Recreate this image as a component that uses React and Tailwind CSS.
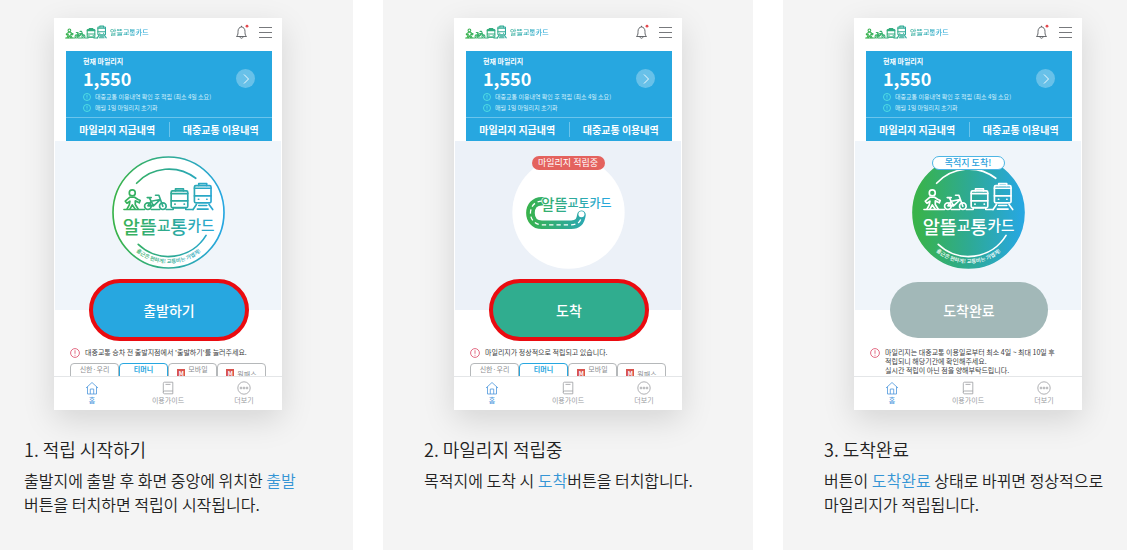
import React from 'react'
import clsx from 'clsx'

const steps = [
    {
        id: 'start',
        title: '1. 적립 시작하기',
        before: '출발지에 출발 후 화면 중앙에 위치한 ',
        accent: '출발',
        after: ' 버튼을 터치하면 적립이 시작됩니다.',
        button: '출발하기',
        notice: ["대중교통 승차 전 출발지점에서 '출발하기'를 눌러주세요."],
    },
    {
        id: 'moving',
        title: '2. 마일리지 적립중',
        before: '목적지에 도착 시 ',
        accent: '도착',
        after: '버튼을 터치합니다.',
        button: '도착',
        notice: ['마일리지가 정상적으로 적립되고 있습니다.'],
    },
    {
        id: 'done',
        title: '3. 도착완료',
        before: '버튼이 ',
        accent: '도착완료',
        after: ' 상태로 바뀌면 정상적으로 마일리지가 적립됩니다.',
        button: '도착완료',
        notice: [
            '마일리지는 대중교통 이용일로부터 최소 4일 ~ 최대 10일 후',
            '적립되니 해당기간에 확인해주세요.',
            '실시간 적립이 아닌 점을 양해부탁드립니다.',
        ],
    },
]

const buttonStyles = {
    start: 'h-[62px] w-40 border-4 border-[#ea0b10] bg-[#27a7e0]',
    moving: 'h-[62px] w-40 border-4 border-[#ea0b10] bg-[#30ad8f]',
    done: 'my-[3px] h-14 w-[158px] bg-[#a2b8b8]',
}

// Walker, bicycle, bus and train standing on one ground line
const Transit = () => (
    <g fill="none" strokeLinecap="round" strokeLinejoin="round">
        <circle cx="247" cy="158" r="9" />
        <path d="M240 171 L226 183 L231 189 L240 183 L238 194 L231 207 M254 171 L263 177 L271 181 L268 188 L256 182 V193 L265 207 M240 171 H254 M240 207 L247 194 L256 207" />
        <path d="M222 208 H284 M304 208 H330 M349 208 H370 V203 M408 203 V208 H430" />
        <circle cx="294" cy="198" r="10" />
        <circle cx="339" cy="198" r="10" />
        <path d="M292 172 H304 M298 172 L311 197 H294 L304 183 L331 178 L311 197 M317 165 H327 L339 198" />
        <rect x="364" y="152" width="50" height="50" rx="4" />
        <path d="M377 152 V146 H401 V152 M364 160 H414 M364 182 H414 M374 203 H404" />
        <path d="M375 192 h1 M403 192 h1" />
        <rect x="434" y="136" width="50" height="52" rx="4" />
        <path d="M447 136 V130 H471 V136 M434 144 H484 M434 167 H484 M446 177 h1 M471 177 h1" />
        <path d="M440 193 L430 208 M478 193 L489 208 M447 196 H471 M443 207 H475" />
    </g>
)

const Gradient = ({ id, x1, x2 }) => (
    <linearGradient id={id} gradientUnits="userSpaceOnUse" x1={x1} y1="0" x2={x2} y2="0">
        <stop offset="0" stopColor="#39b34a" />
        <stop offset="0.5" stopColor="#2eaa93" />
        <stop offset="1" stopColor="#27a7e0" />
    </linearGradient>
)

const HeaderLogo = ({ id }) => (
    <div className="flex items-center gap-[3px]">
        <svg viewBox="218 124 276 90" className="h-[14px] w-[42px]" aria-hidden="true">
            <defs><Gradient id={`head-${id}`} x1="218" x2="700" /></defs>
            <g stroke={`url(#head-${id})`} strokeWidth="7"><Transit /></g>
        </svg>
        <span className="bg-linear-to-r from-[#2eaa93] to-[#27a7e0] bg-clip-text text-[7px] leading-[12px] font-medium text-transparent">
            알뜰교통카드
        </span>
    </div>
)

const Badge = ({ id, filled }) => {
    const paint = filled ? '#fff' : `url(#badge-${id})`
    return (
        <svg viewBox="186 47 340 340" className="size-[113px]" role="img">
            <defs>
                <Gradient id={`badge-${id}`} x1="200" x2="515" />
                <path id={`curve-${id}`} d="M203 217 A153 153 0 0 0 509 217" />
            </defs>
            <circle cx="356" cy="217" r="167" fill={filled ? `url(#badge-${id})` : '#fff'} stroke={`url(#badge-${id})`} strokeWidth="5" />
            <g stroke={paint} strokeWidth="5">
                <Transit />
                <path fill="none" strokeLinecap="round" d="M260 129 A132 132 0 0 1 438 114 M265 313 A132 132 0 0 0 469 286" />
            </g>
            <text x="356" y="281" textAnchor="middle" fontWeight="500" fill={paint}>
                <tspan fontSize="56">알뜰</tspan>
                <tspan fontSize="44" dy="-9">교</tspan>
                <tspan fontSize="56" dy="9">통</tspan>
                <tspan fontSize="44" dy="-9">카드</tspan>
            </text>
            <text fontSize="16" fontWeight="500" fill={paint} textAnchor="middle">
                <textPath href={`#curve-${id}`} startOffset="50%">출근은 편하게! 교통비는 가볍게!</textPath>
            </text>
        </svg>
    )
}

// The end of the road closes the fourth letter of the name
const RoadBadge = () => (
    <svg viewBox="186 47 340 340" className="size-[113px]" role="img">
        <defs><Gradient id="road" x1="228" x2="480" /></defs>
        <circle cx="356" cy="217" r="169" fill="#fff" />
        <path d="M284 183 H276 C230 183 230 254 276 254 H364 C388 254 393 240 395 224" fill="none" stroke="url(#road)" strokeWidth="26" strokeLinecap="round" />
        <path d="M276 183 C230 183 230 254 276 254 H364 C385 254 392 243 394 234" fill="none" stroke="#fff" strokeWidth="4" strokeDasharray="13 9" />
        <circle cx="286" cy="183" r="9" fill="#fff" />
        <circle cx="395" cy="222" r="9" fill="#fff" />
        <text x="274" y="208" fontWeight="500" fill="url(#road)" stroke="#fff" strokeWidth="4" paintOrder="stroke">
            <tspan fontSize="43">알뜰</tspan>
            <tspan fontSize="36" dy="-6">교토카드</tspan>
        </text>
    </svg>
)

const AlertIcon = ({ className }) => (
    <svg viewBox="0 0 10 10" className={className} fill="none" stroke="currentColor" aria-hidden="true">
        <circle cx="5" cy="5" r="4.4" strokeWidth="0.9" />
        <path d="M5 2.3 V5.8 M5 6.8 V7.7" strokeWidth="0.9" />
    </svg>
)

const MileageCard = () => (
    <section className="mr-[10px] ml-3 bg-[#27a7e0] text-white">
        <div className="flex h-[66px] items-start justify-between px-[17px] pt-[5px]">
            <div>
                <h2 className="text-[7px] leading-[10px] font-bold">현재 마일리지</h2>
                <p className="text-[18px] leading-[25px] font-bold">1,550</p>
                <ul className="text-[6px] leading-[11px] text-[#d5f0fb]">
                    <li className="flex items-center gap-1">
                        <AlertIcon className="size-2 text-[#5ff0e4]" />
                        대중교통 이용내역 확인 후 적립 (최소 4일 소요)
                    </li>
                    <li className="flex items-center gap-1">
                        <AlertIcon className="size-2 text-[#5ff0e4]" />
                        매월 1일 마일리지 초기화
                    </li>
                </ul>
            </div>
            <button aria-label="마일리지 상세" className="mt-[13px] flex size-[19px] items-center justify-center rounded-full bg-white/30">
                <svg viewBox="0 0 10 10" className="size-[10px]" fill="none" stroke="#fff" strokeWidth="0.9">
                    <path d="M3 0.5 L7.5 5 L3 9.5" />
                </svg>
            </button>
        </div>
        <div className="flex h-6 items-center border-t border-[#6bc4ec] text-[10px] leading-[14px] font-bold">
            <a href="#paid" className="flex-1 text-center">마일리지 지급내역</a>
            <span className="h-[15px] w-px bg-[#6bc4ec]" />
            <a href="#usage" className="flex-1 text-center">대중교통 이용내역</a>
        </div>
    </section>
)

const CardTabs = () => (
    <div className="mx-4 mt-[5px] grid grid-cols-4 text-[7px] leading-[11px] text-[#8b8d90]">
        <button className="flex h-5 justify-center rounded-t-sm border border-[#b5b8ba]">신한·우리</button>
        <button className="flex h-5 justify-center rounded-t-sm border border-[#27a7e0] font-bold text-[#27a7e0]">티머니</button>
        <button className="flex h-5 items-start justify-center gap-[3px] rounded-t-sm border border-[#b5b8ba]">
            <span className="mt-[5px] flex size-2 items-center justify-center bg-[#d9544f] text-[6px] font-bold text-white">M</span>
            모바일
        </button>
        <button className="flex h-5 items-start justify-center gap-[3px] rounded-t-sm border border-[#b5b8ba] pt-[5px]">
            <span className="flex size-2 items-center justify-center bg-[#d9544f] text-[6px] font-bold text-white">M</span>
            원패스
        </button>
    </div>
)

const BottomNav = () => (
    <nav className="grid h-[34px] grid-cols-3 border-t border-[#e4e6e8] bg-white text-[7px] leading-[10px] text-[#9a9c9f]">
        <a href="#home" className="flex flex-col items-center pt-1 text-[#4b95dc]">
            <svg viewBox="0 0 14 14" className="size-[14px]" fill="none" stroke="currentColor" strokeWidth="0.8">
                <path d="M1 7 L7 1.5 L13 7 M2.5 5.8 V13 H11.5 V5.8 M5.3 13 V8 H8.7 V13" />
            </svg>
            홈
        </a>
        <a href="#guide" className="flex flex-col items-center pt-1">
            <svg viewBox="0 0 14 14" className="size-[14px]" fill="none" stroke="currentColor" strokeWidth="0.8">
                <path d="M11.8 10 H3.5 C1.8 10 1.8 12.8 3.5 12.8 H11.8 V1.2 H3.5 C2.6 1.2 2.3 1.8 2.3 2.5 V11.4 M4.5 3.4 H9.5" />
            </svg>
            이용가이드
        </a>
        <a href="#more" className="flex flex-col items-center pt-1">
            <svg viewBox="0 0 14 14" className="size-[14px]" fill="none" stroke="currentColor" strokeWidth="0.8">
                <circle cx="7" cy="7" r="6.2" />
                <circle cx="4" cy="7" r="0.9" />
                <circle cx="7" cy="7" r="0.9" />
                <circle cx="10" cy="7" r="0.9" />
            </svg>
            더보기
        </a>
    </nav>
)

const Phone = ({ step }) => (
    <div className="mx-auto w-[228px] bg-white shadow-[0_10px_30px_rgba(0,0,0,0.13)]">
        <header className="flex h-[33px] items-center justify-between pr-[10px] pb-[5px] pl-[11px]">
            <HeaderLogo id={step.id} />
            <div className="flex items-center gap-[10px]">
                <button aria-label="알림">
                    <svg viewBox="0 0 14 16" className="h-4 w-[14px]" fill="none" stroke="#55585c" strokeWidth="0.9">
                        <path d="M1.5 12.5 C3.2 11 3 9 3 7.5 C3 4.8 4.5 3 6.5 3 C8.5 3 10 4.8 10 7.5 C10 9 9.8 11 11.5 12.5 Z M5 12.8 C5.3 14.8 7.7 14.8 8 12.8 M6.5 3 V1.8" />
                        <circle cx="12" cy="2.2" r="1.4" fill="#e5484d" stroke="none" />
                    </svg>
                </button>
                <button aria-label="메뉴" className="flex w-[13px] flex-col gap-1">
                    <span className="h-px w-full bg-[#77797c]" />
                    <span className="h-px w-full bg-[#77797c]" />
                    <span className="h-px w-full bg-[#77797c]" />
                </button>
            </div>
        </header>
        <MileageCard />
        <div className={clsx('mx-px flex h-[169px] justify-center pt-[15px]', step.id === 'moving' ? 'bg-[#ecf1f8]' : 'bg-[#f0f5fa]')}>
            <div className="relative h-[113px]">
                {step.id === 'moving' ? <RoadBadge /> : <Badge id={step.id} filled={step.id === 'done'} />}
                {step.id === 'moving' && (
                    <span className="absolute inset-x-5 top-0 h-[14px] rounded-full bg-[#e4625e] text-center text-[9px] leading-[13px] text-white">
                        마일리지 적립중
                    </span>
                )}
                {step.id === 'done' && (
                    <span className="absolute inset-x-5 top-0 h-[14px] rounded-full border border-[#4db5e4] bg-white text-center text-[9px] leading-[12px] font-medium text-[#27a0dc]">
                        목적지 도착!
                    </span>
                )}
            </div>
        </div>
        <div className="relative -mt-[31px] flex justify-center pl-0.5">
            <button className={clsx('rounded-full text-sm font-medium text-white', buttonStyles[step.id])}>
                {step.button}
            </button>
        </div>
        <div className="h-[35px] overflow-hidden">
            <div className="flex gap-[5px] pt-[7px] pl-4 text-[7px] leading-[9px] text-[#3c3e42]">
                <AlertIcon className="size-[10px] shrink-0 text-[#e05a76]" />
                <p>
                    {step.notice.map((line) => (
                        <span key={line} className="block whitespace-nowrap">{line}</span>
                    ))}
                </p>
            </div>
            {step.id !== 'done' && <CardTabs />}
        </div>
        <BottomNav />
    </div>
)

const App = () => {
    return (
        <div className="min-h-screen overflow-hidden bg-white font-['Noto_Sans_CJK_KR',sans-serif]">
            {/* Outer slides run past both window edges */}
            <div className="-mr-[26px] -ml-[17px] grid min-h-screen grid-cols-3 gap-[30px]">
                {steps.map((step) => (
                    <article key={step.id} className="bg-[#f4f4f4] pt-[18px]">
                        <Phone step={step} />
                        <div className="px-[41px] pt-[27px] font-[350] break-keep text-[#222]">
                            <h3 className="text-lg leading-6">{step.title}</h3>
                            <p className="mt-[7px] text-base leading-6">
                                {step.before}
                                <span className="text-[#3595d5]">{step.accent}</span>
                                {step.after}
                            </p>
                        </div>
                    </article>
                ))}
            </div>
        </div>
    )
}

export default App
